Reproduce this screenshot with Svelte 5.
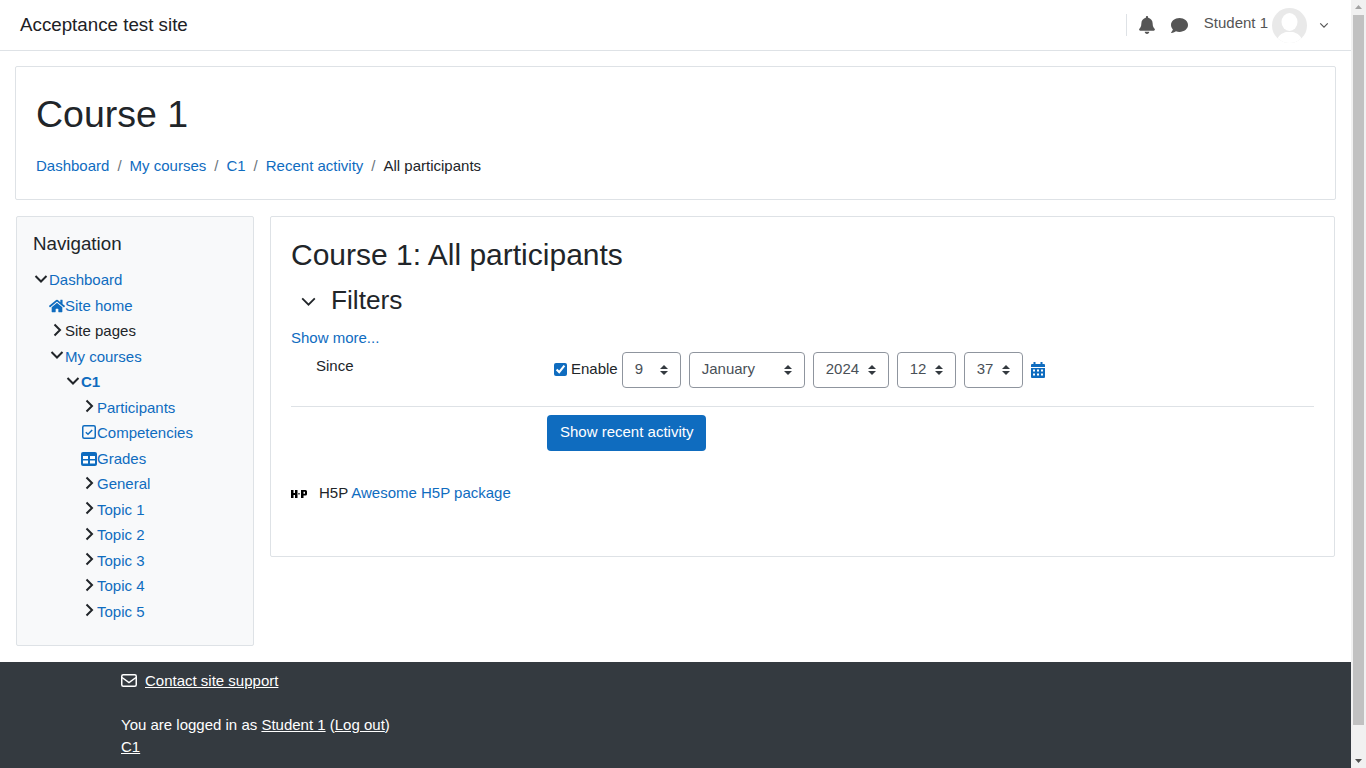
<script lang="ts">
  type Node = { label: string; depth: number; icon: string; link?: boolean; bold?: boolean };

  const tree: Node[] = [
    { label: 'Dashboard', depth: 0, icon: 'down', link: true },
    { label: 'Site home', depth: 1, icon: 'home', link: true },
    { label: 'Site pages', depth: 1, icon: 'right' },
    { label: 'My courses', depth: 1, icon: 'down', link: true },
    { label: 'C1', depth: 2, icon: 'down', link: true, bold: true },
    { label: 'Participants', depth: 3, icon: 'right', link: true },
    { label: 'Competencies', depth: 3, icon: 'check', link: true },
    { label: 'Grades', depth: 3, icon: 'table', link: true },
    { label: 'General', depth: 3, icon: 'right', link: true },
    { label: 'Topic 1', depth: 3, icon: 'right', link: true },
    { label: 'Topic 2', depth: 3, icon: 'right', link: true },
    { label: 'Topic 3', depth: 3, icon: 'right', link: true },
    { label: 'Topic 4', depth: 3, icon: 'right', link: true },
    { label: 'Topic 5', depth: 3, icon: 'right', link: true },
  ];

  const selects = [
    { value: '9', width: 59 },
    { value: 'January', width: 116 },
    { value: '2024', width: 76 },
    { value: '12', width: 59 },
    { value: '37', width: 59 },
  ];

  const crumbs = ['Dashboard', 'My courses', 'C1', 'Recent activity'];
</script>

<div class="shell">
  <div class="page">
    <header class="navbar">
      <span class="brand">Acceptance test site</span>
      <div class="usernav">
        <span class="divider"></span>
        <svg class="bell" viewBox="0 0 448 512" width="16" height="18"><path d="M224 512c35.32 0 63.97-28.65 63.97-64H160.03c0 35.35 28.65 64 63.97 64zm215.39-149.71c-19.32-20.76-55.47-51.99-55.47-154.29 0-77.7-54.48-139.9-127.94-155.16V32c0-17.67-14.32-32-31.98-32s-31.98 14.33-31.98 32v20.84C118.56 68.1 64.08 130.3 64.08 208c0 102.3-36.15 133.53-55.47 154.29-6 6.45-8.66 14.16-8.61 21.71.11 16.4 12.98 32 32.1 32h383.8c19.12 0 32-15.6 32.1-32 .05-7.55-2.61-15.27-8.61-21.71z"/></svg>
        <svg class="chat" viewBox="0 0 512 512" width="17" height="17"><path d="M256 32C114.6 32 0 125.1 0 240c0 49.6 21.4 95 57 130.7C44.5 421.1 2.7 466 2.2 466.5c-2.2 2.3-2.8 5.7-1.5 8.7S4.8 480 8 480c66.3 0 116-31.8 140.6-51.4 32.7 12.3 69 19.4 107.4 19.4 141.4 0 256-93.1 256-208S397.4 32 256 32z"/></svg>
        <span class="username">Student 1</span>
        <svg class="avatar" viewBox="0 0 35 35" width="35" height="35">
          <defs><clipPath id="av"><circle cx="17.5" cy="17.5" r="17.5"/></clipPath></defs>
          <circle cx="17.5" cy="17.5" r="17.5" fill="#e9e9e9"/>
          <g clip-path="url(#av)" fill="#fff">
            <ellipse cx="17.5" cy="14" rx="8" ry="9"/>
            <path d="M4 35c1-7 6-10 10-11h7c4 1 9 4 10 11z"/>
          </g>
        </svg>
        <svg class="caret" viewBox="0 0 12 8" width="10" height="7"><path d="M1.5 1.5 6 6l4.5-4.5" fill="none" stroke="#555" stroke-width="1.4"/></svg>
      </div>
    </header>

    <section class="page-head">
      <h1>Course 1</h1>
      <nav class="crumbs">
        {#each crumbs as c}
          <a href="#top">{c}</a><span class="sep">/</span>
        {/each}
        <span>All participants</span>
      </nav>
    </section>

    <div class="columns">
      <aside class="block">
        <h5>Navigation</h5>
        <ul class="tree">
          {#each tree as n (n.label)}
            <li style="padding-left: {n.depth * 16}px">
              <span class="ticon" class:wide={n.icon === 'home' || n.icon === 'table'}>
                {#if n.icon === 'down'}
                  <svg viewBox="0 0 14 14" width="14" height="14"><path d="M1.5 4 7 9.5 12.5 4" fill="none" stroke="#212529" stroke-width="2"/></svg>
                {:else if n.icon === 'right'}
                  <svg viewBox="0 0 14 14" width="14" height="14"><path d="M4.5 1.5 10 7l-5.500 5.500" fill="none" stroke="#212529" stroke-width="2"/></svg>
                {:else if n.icon === 'home'}
                  <svg viewBox="0 0 576 512" width="18" height="16" fill="#0f6cbf"><path d="M280.37 148.26L96 300.11V464a16 16 0 0 0 16 16l112.06-.29a16 16 0 0 0 15.92-16V368a16 16 0 0 1 16-16h64a16 16 0 0 1 16 16v95.64a16 16 0 0 0 16 16.05L464 480a16 16 0 0 0 16-16V300L295.67 148.26a12.19 12.19 0 0 0-15.3 0zM571.6 251.47L488 182.56V44.05a12 12 0 0 0-12-12h-56a12 12 0 0 0-12 12v72.61L318.47 43a48 48 0 0 0-61 0L4.34 251.47a12 12 0 0 0-1.6 16.9l25.5 31A12 12 0 0 0 45.15 301l235.22-193.74a12.19 12.19 0 0 1 15.3 0L530.9 301a12 12 0 0 0 16.9-1.6l25.5-31a12 12 0 0 0-1.7-16.93z"/></svg>
                {:else if n.icon === 'check'}
                  <svg viewBox="0 0 14 14" width="14" height="14"><rect x=".75" y=".75" width="12.500" height="12.500" rx="1.500" fill="none" stroke="#0f6cbf" stroke-width="1.500"/><path d="M3.800 7.200 6 9.300l4.200-4.300" fill="none" stroke="#0f6cbf" stroke-width="1.500"/></svg>
                {:else if n.icon === 'table'}
                  <svg viewBox="0 0 16 14" width="16" height="14"><rect width="16" height="14" rx="2" fill="#0f6cbf"/><rect x="2" y="4" width="5" height="3" fill="#fff"/><rect x="9" y="4" width="5" height="3" fill="#fff"/><rect x="2" y="8.500" width="5" height="3" fill="#fff"/><rect x="9" y="8.500" width="5" height="3" fill="#fff"/></svg>
                {/if}
              </span>
              <span class:link={n.link} class:bold={n.bold}>{n.label}</span>
            </li>
          {/each}
        </ul>
      </aside>

      <main class="content">
        <h2>Course 1: All participants</h2>
        <div class="filters-head">
          <svg viewBox="0 0 16 10" width="15" height="9"><path d="M1 1.500 8 8.500l7-7" fill="none" stroke="#212529" stroke-width="2"/></svg>
          <h3>Filters</h3>
        </div>
        <a class="more" href="#top">Show more...</a>
        <div class="since-row">
          <span class="since">Since</span>
          <div class="controls">
            <label class="enable"><input type="checkbox" checked /> Enable</label>
            {#each selects as s}
              <div class="select" style="width: {s.width}px">
                <span>{s.value}</span>
                <svg viewBox="0 0 8 10" width="8" height="10" fill="#343a40"><path d="M4 0 8 4H0zM4 10 0 6h8z"/></svg>
              </div>
            {/each}
            <svg class="cal" viewBox="0 0 14 16" width="14" height="16">
              <rect x="2.500" y="0" width="2" height="3" fill="#0f6cbf"/>
              <rect x="9.500" y="0" width="2" height="3" fill="#0f6cbf"/>
              <path d="M1 2h12a1 1 0 0 1 1 1v2H0V3a1 1 0 0 1 1-1zM0 6h14v9a1 1 0 0 1-1 1H1a1 1 0 0 1-1-1z" fill="#0f6cbf"/>
              <g fill="#fff">
                <rect x="2" y="7.500" width="2" height="2"/><rect x="6" y="7.500" width="2" height="2"/><rect x="10" y="7.500" width="2" height="2"/>
                <rect x="2" y="11.500" width="2" height="2"/><rect x="6" y="11.500" width="2" height="2"/><rect x="10" y="11.500" width="2" height="2"/>
              </g>
            </svg>
          </div>
        </div>
        <hr />
        <div class="submit-row">
          <button type="button">Show recent activity</button>
        </div>
        <div class="activity">
          <svg class="h5p" viewBox="0 0 16 8" width="16" height="8" fill="#000">
            <rect x="0" y="0" width="2.500" height="8"/><rect x="4" y="0" width="2.500" height="8"/><rect x="2" y="3" width="3" height="2"/>
            <rect x="7" y="3" width="2" height="1.500" fill="#555"/>
            <path d="M10 0h4.500a1.500 1.500 0 0 1 1.500 1.500V4a1.500 1.500 0 0 1-1.500 1.500H12.500V8H10zm2.500 1.800v2h1.500v-2z" fill-rule="evenodd"/>
          </svg>
          <span>H5P <a href="#top">Awesome H5P package</a></span>
        </div>
      </main>
    </div>

    <footer class="foot">
      <div class="support">
        <svg viewBox="0 0 16 13" width="16" height="13"><rect x=".75" y=".75" width="14.500" height="11.500" rx="1.500" fill="none" stroke="#fff" stroke-width="1.500"/><path d="M1 3.500 8 8.500l7-5" fill="none" stroke="#fff" stroke-width="1.500"/></svg>
        <a href="#top">Contact site support</a>
      </div>
      <div class="logged">You are logged in as <a href="#top">Student 1</a> (<a href="#top">Log out</a>)</div>
      <div><a href="#top">C1</a></div>
    </footer>
  </div>

  <div class="scrollbar">
    <svg viewBox="0 0 15 15" width="15" height="15"><path d="M7.500 5 11 9H4z" fill="#a3a3a3"/></svg>
    <div class="thumb-track"><div class="thumb"></div></div>
    <svg viewBox="0 0 15 15" width="15" height="15"><path d="M7.500 10 4 6h7z" fill="#505050"/></svg>
  </div>
</div>

<style>
  :global(body) {
    margin: 0;
    overflow: hidden;
  }
  .shell {
    display: flex;
    height: 768px;
    overflow: hidden;
    font-family: "Liberation Sans", Arial, sans-serif;
    font-size: 15px;
    line-height: 22.5px;
    color: #212529;
  }
  .page {
    width: 1351px;
    flex-shrink: 0;
    overflow: hidden;
    background: #fff;
  }
  a {
    color: #0f6cbf;
    text-decoration: none;
  }

  .navbar {
    height: 50px;
    border-bottom: 1px solid #dee2e6;
    display: flex;
    align-items: center;
    justify-content: space-between;
    padding: 0 20px;
  }
  .brand {
    font-size: 18.75px;
    color: #1d2125;
  }
  .usernav {
    display: flex;
    align-items: center;
    fill: #555;
    color: #555;
  }
  .divider {
    width: 1px;
    height: 22px;
    background: #dee2e6;
    margin-right: 12px;
  }
  .chat {
    margin-left: 16px;
  }
  .username {
    margin-left: 16px;
    margin-top: -3px;
  }
  .avatar {
    margin-left: 4px;
  }
  .caret {
    margin-left: 12px;
    margin-right: 2px;
  }

  .page-head {
    margin: 15px 15px 0;
    height: 134px;
    box-sizing: border-box;
    border: 1px solid #dee2e6;
    border-radius: 2px;
    padding: 20px;
  }
  h1 {
    margin: 0;
    font-size: 37.5px;
    font-weight: 400;
    line-height: 54px;
  }
  .crumbs {
    margin-top: 14px;
    display: flex;
  }
  .sep {
    color: #6a737b;
    padding: 0 8px;
  }

  .columns {
    display: flex;
    align-items: flex-start;
    gap: 16px;
    margin: 16px 16px 0;
    height: 446px;
  }
  .block {
    width: 238px;
    height: 430px;
    box-sizing: border-box;
    flex-shrink: 0;
    background: #f8f9fa;
    border: 1px solid #dee2e6;
    border-radius: 2px;
    padding: 16px;
  }
  h5 {
    margin: 0 0 12px;
    font-size: 18.75px;
    font-weight: 400;
    line-height: 22.5px;
  }
  .tree {
    list-style: none;
    margin: 0;
    padding: 0;
  }
  .tree li {
    display: flex;
    align-items: center;
    height: 25.5px;
  }
  .ticon {
    width: 16px;
    height: 16px;
    display: flex;
    align-items: center;
    justify-content: center;
    flex-shrink: 0;
    margin-top: -3px;
  }
  .ticon.wide {
    margin-top: 0;
  }
  .link {
    color: #0f6cbf;
  }
  .bold {
    font-weight: 700;
  }

  .content {
    flex: 1;
    min-width: 0;
    height: 341px;
    box-sizing: border-box;
    border: 1px solid #dee2e6;
    border-radius: 2px;
    padding: 20px;
  }
  h2 {
    margin: 0;
    font-size: 30px;
    font-weight: 400;
    line-height: 36px;
  }
  .filters-head {
    display: flex;
    align-items: center;
    margin-top: 9px;
    height: 36px;
  }
  .filters-head svg {
    margin-left: 10px;
    margin-top: 3px;
  }
  h3 {
    margin: 0 0 0 15px;
    font-size: 26.250px;
    font-weight: 400;
    line-height: 32px;
  }
  .more {
    display: block;
    margin-top: 9px;
  }
  .since-row {
    display: flex;
    align-items: flex-start;
    margin-top: 2px;
  }
  .since {
    width: 238px;
    padding-left: 25px;
    padding-top: 3px;
    box-sizing: border-box;
    flex-shrink: 0;
  }
  .controls {
    display: flex;
    align-items: center;
    margin-left: 25px;
    height: 36px;
  }
  .enable {
    display: flex;
    align-items: center;
    gap: 4px;
    margin-right: 4px;
  }
  .enable input {
    margin: 0;
    width: 13px;
    height: 13px;
    accent-color: #0f6cbf;
  }
  .select {
    height: 36px;
    box-sizing: border-box;
    border: 1px solid #8f959e;
    border-radius: 4px;
    padding: 0 12px;
    margin-right: 8px;
    display: flex;
    align-items: center;
    justify-content: space-between;
    color: #495057;
  }
  .cal {
    margin-left: 0;
  }
  hr {
    border: 0;
    border-top: 1px solid #dee2e6;
    margin: 18px 0 8px;
  }
  .submit-row {
    padding-left: 256px;
  }
  button {
    height: 36px;
    padding: 0 13px;
    border: 0;
    border-radius: 4px;
    background: #0f6cbf;
    color: #fff;
    font: inherit;
  }
  .activity {
    display: flex;
    align-items: center;
    margin-top: 31px;
  }
  .h5p {
    margin-right: 12px;
    margin-top: 2px;
  }

  .foot {
    height: 106px;
    margin-top: 0;
    box-sizing: border-box;
    background: #343a40;
    color: #fff;
    padding: 8px 0 0 121px;
    line-height: 22px;
  }
  .foot a {
    color: #fff;
    text-decoration: underline;
  }
  .support {
    display: flex;
    align-items: center;
    gap: 8px;
  }
  .support svg {
    margin-top: -2px;
  }
  .logged {
    margin-top: 22px;
  }

  .scrollbar {
    width: 15px;
    background: #f1f1f1;
    display: flex;
    flex-direction: column;
  }
  .thumb-track {
    flex: 1;
  }
  .thumb {
    height: 710px;
    margin: 0 2px 0 2px;
    background: #c1c1c1;
  }
</style>
